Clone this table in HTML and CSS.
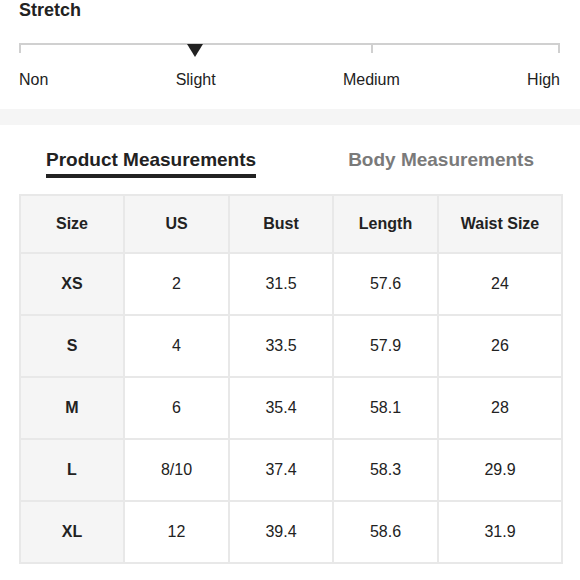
FILE: index.html
```html
<!DOCTYPE html>
<html>
<head>
<meta charset="utf-8">
<link rel="stylesheet" href="styles.css">
</head>
<body>
<section class="stretch">
  <h2 class="title">Stretch</h2>
  <div class="track">
    <span class="tick tick-start"></span>
    <span class="tick tick-mid"></span>
    <span class="tick tick-end"></span>
    <span class="marker"></span>
  </div>
  <div class="labels">
    <span>Non</span>
    <span>Slight</span>
    <span>Medium</span>
    <span>High</span>
  </div>
</section>
<div class="band"></div>
<section class="measure">
  <div class="tabs">
    <div class="tab active">Product Measurements</div>
    <div class="tab">Body Measurements</div>
  </div>
  <table class="sizes">
    <colgroup>
      <col class="c1"><col class="c2"><col class="c3"><col class="c4"><col class="c5">
    </colgroup>
    <thead>
      <tr><th>Size</th><th>US</th><th>Bust</th><th>Length</th><th>Waist Size</th></tr>
    </thead>
    <tbody>
      <tr><th>XS</th><td>2</td><td>31.5</td><td>57.6</td><td>24</td></tr>
      <tr><th>S</th><td>4</td><td>33.5</td><td>57.9</td><td>26</td></tr>
      <tr><th>M</th><td>6</td><td>35.4</td><td>58.1</td><td>28</td></tr>
      <tr><th>L</th><td>8/10</td><td>37.4</td><td>58.3</td><td>29.9</td></tr>
      <tr><th>XL</th><td>12</td><td>39.4</td><td>58.6</td><td>31.9</td></tr>
    </tbody>
  </table>
</section>
</body>
</html>
```
FILE: styles.css
```css
* { box-sizing: border-box; }
body {
  margin: 0;
  background: #fff;
  color: #222;
  font-family: "Liberation Sans", Arial, sans-serif;
}
.stretch {
  padding: 0 20px 0 19px;
  height: 109px;
}
.title {
  margin: 0;
  font-size: 18px;
  line-height: 20px;
  font-weight: bold;
  color: #222;
}
.track {
  position: relative;
  margin-top: 23px;
  height: 2px;
  background: #d0d0d0;
}
.tick {
  position: absolute;
  top: 0;
  width: 2px;
  height: 10px;
  background: #d0d0d0;
}
.tick-start { left: 0; }
.tick-mid { left: 352px; }
.tick-end { right: 0; }
.marker {
  position: absolute;
  top: 1px;
  left: 168px;
  width: 0;
  height: 0;
  border-left: 8px solid transparent;
  border-right: 8px solid transparent;
  border-top: 13px solid #222;
}
.labels {
  margin-top: 26px;
  display: flex;
  justify-content: space-between;
  font-size: 16px;
  line-height: 18px;
  color: #222;
}
.band {
  height: 16px;
  background: #f5f5f5;
}
.measure {
  padding: 0 19px 0 19px;
}
.tabs {
  display: flex;
  padding-top: 24px;
  padding-left: 27px;
  height: 69px;
}
.tab {
  font-size: 19px;
  line-height: 22px;
  font-weight: bold;
  color: #7a7a7a;
  height: 29px;
}
.tab.active {
  color: #222;
  border-bottom: 4px solid #222;
  margin-right: 92px;
}
.sizes {
  width: 542px;
  border-collapse: collapse;
  table-layout: fixed;
  font-size: 16px;
}
.c1 { width: 104px; }
.c2 { width: 105px; }
.c3 { width: 104px; }
.c4 { width: 105px; }
.c5 { width: 124px; }
.sizes th, .sizes td {
  border: 2px solid #e8e8e8;
  text-align: center;
  vertical-align: middle;
  padding: 0;
}
.sizes thead th {
  height: 58px;
  background: #f5f5f5;
  font-weight: bold;
}
.sizes tbody tr { height: 62px; }
.sizes tbody th {
  background: #f5f5f5;
  font-weight: bold;
}
.sizes td {
  font-weight: normal;
  color: #222;
}
```
